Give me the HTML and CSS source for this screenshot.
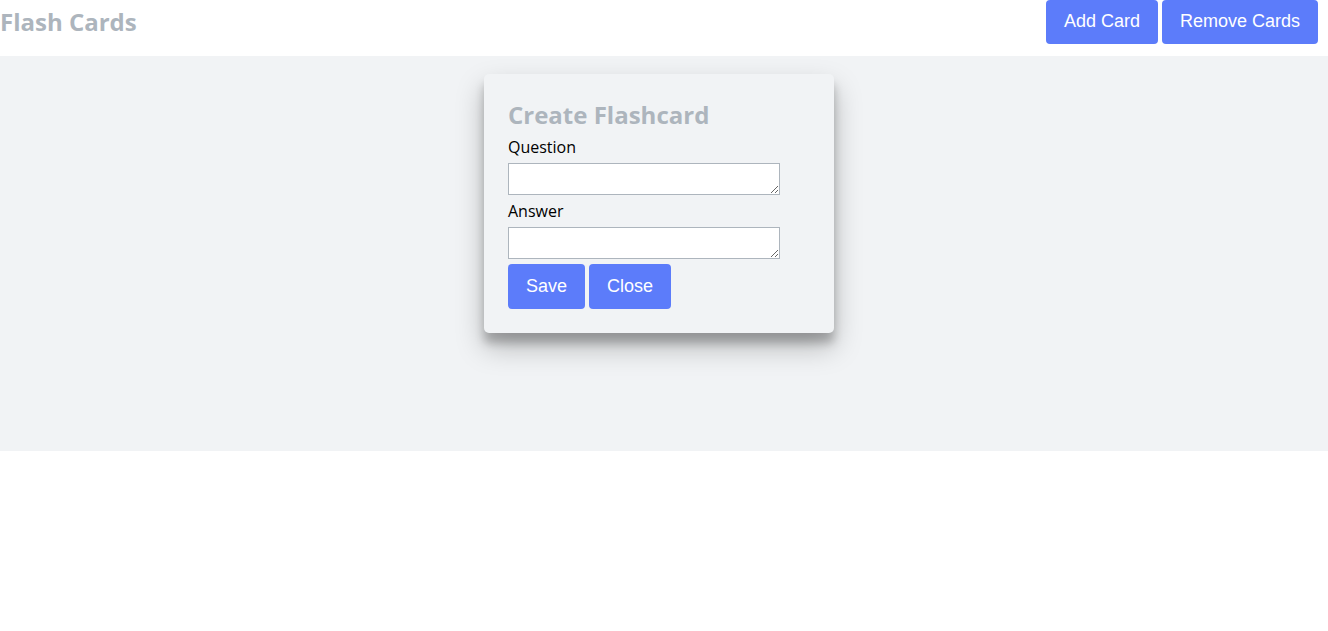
FILE: index.html
```html
<!DOCTYPE html>
<html>
<head>
<meta charset="utf-8">
<link rel="stylesheet" href="styles.css">
</head>
<body>
<header class="header">
  <h1 class="brand">Flash Cards</h1>
  <div class="actions">
    <button class="btn">Add Card</button>
    <button class="btn">Remove Cards</button>
  </div>
</header>
<main class="stage">
  <div class="modal">
    <h2 class="modal-title">Create Flashcard</h2>
    <label class="label">Question</label>
    <textarea class="field"></textarea>
    <label class="label">Answer</label>
    <textarea class="field"></textarea>
    <div class="modal-actions">
      <button class="btn btn-lg">Save</button>
      <button class="btn btn-lg">Close</button>
    </div>
  </div>
</main>
</body>
</html>
```
FILE: styles.css
```css
* { box-sizing: border-box; }
html, body { margin: 0; padding: 0; background: #fff; }
body { font-family: "Open Sans", sans-serif; color: #000; }

.header {
  height: 56px;
  display: flex;
  justify-content: space-between;
  align-items: flex-start;
  padding-right: 10px;
}
.brand {
  margin: 0;
  font-size: 24px;
  line-height: 44px;
  font-weight: 700;
  color: #adb5bd;
}
.actions { display: flex; gap: 4px; }

.btn {
  font-family: "Liberation Sans", Arial, sans-serif;
  font-size: 18px;
  line-height: 20px;
  color: #fff;
  background: #5c7cfa;
  border: none;
  border-radius: 4px;
  height: 44px;
  padding: 0 18px 2px;
  cursor: pointer;
}
.btn-lg { height: 45px; padding-bottom: 1px; }

.stage {
  background: #f1f3f5;
  height: 395px;
  display: flex;
  justify-content: center;
  align-items: flex-start;
  padding-top: 18px;
  padding-right: 10px;
}
.modal {
  width: 350px;
  background: #f1f3f5;
  border-radius: 5px;
  padding: 24px;
  display: flex;
  flex-direction: column;
  align-items: flex-start;
  gap: 5px;
  box-shadow: 0 14px 28px rgba(0, 0, 0, 0.25), 0 10px 10px rgba(0, 0, 0, 0.22);
}
.modal-title {
  margin: 0;
  font-size: 24px;
  line-height: 33px;
  font-weight: 700;
  color: #adb5bd;
}
.label {
  font-size: 16px;
  line-height: 22px;
}
.field {
  width: 272px;
  height: 32px;
  border: 1px solid #adb5bd;
  background: #fff;
  margin: 0;
  display: block;
}
.modal-actions { display: flex; gap: 4px; }
```
